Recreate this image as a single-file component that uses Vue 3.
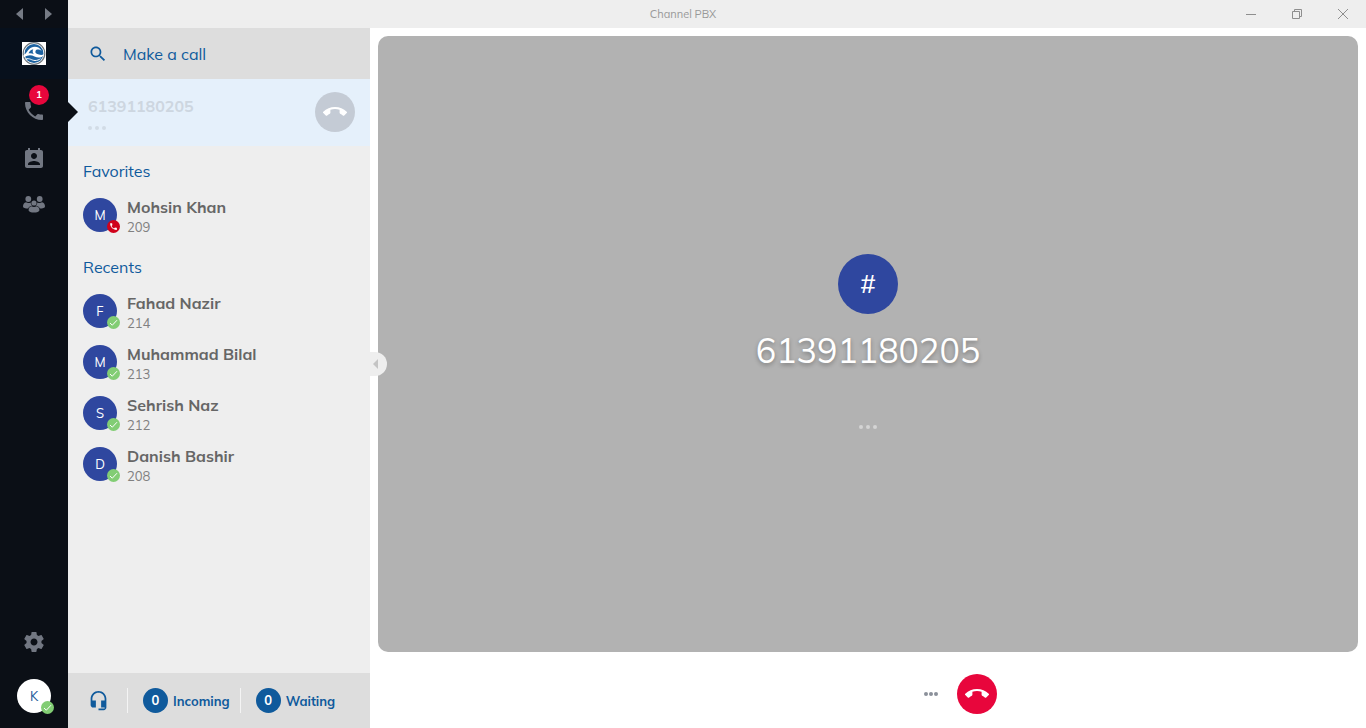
<script setup>
import { ref } from 'vue';

const query = ref('');
const activeNumber = ref('61391180205');

const groups = ref([
    {
        title: 'Favorites',
        contacts: [
            { name: 'Mohsin Khan', ext: '209', status: 'busy' }
        ]
    },
    {
        title: 'Recents',
        contacts: [
            { name: 'Fahad Nazir', ext: '214', status: 'online' },
            { name: 'Muhammad Bilal', ext: '213', status: 'online' },
            { name: 'Sehrish Naz', ext: '212', status: 'online' },
            { name: 'Danish Bashir', ext: '208', status: 'online' }
        ]
    }
]);

const queues = ref([
    { label: 'Incoming', count: 0 },
    { label: 'Waiting', count: 0 }
]);

// Material icon paths, 24x24
const icons = {
    search: 'M15.5 14h-.79l-.28-.27C15.41 12.59 16 11.11 16 9.5 16 5.91 13.09 3 9.5 3S3 5.91 3 9.5 5.91 16 9.5 16c1.61 0 3.09-.59 4.23-1.57l.27.28v.79l5 4.99L20.49 19l-4.99-5zm-6 0C7.01 14 5 11.99 5 9.5S7.01 5 9.5 5 14 7.01 14 9.5 11.99 14 9.5 14z',
    call: 'M6.62 10.79c1.44 2.83 3.76 5.14 6.59 6.59l2.2-2.2c.27-.27.67-.36 1.02-.24 1.12.37 2.33.57 3.57.57.55 0 1 .45 1 1V20c0 .55-.45 1-1 1-9.39 0-17-7.61-17-17 0-.55.45-1 1-1h3.5c.55 0 1 .45 1 1 0 1.25.2 2.45.57 3.57.11.35.03.74-.25 1.02l-2.2 2.2z',
    callEnd: 'M12 9c-1.6 0-3.15.25-4.6.72v3.1c0 .39-.23.74-.56.9-.98.49-1.87 1.12-2.66 1.85-.18.18-.43.28-.7.28-.28 0-.53-.11-.71-.29L.29 13.08c-.18-.17-.29-.42-.29-.7 0-.28.11-.53.29-.71C3.34 8.78 7.46 7 12 7s8.66 1.78 11.71 4.67c.18.18.29.43.29.71 0 .28-.11.53-.29.71l-2.48 2.48c-.18.18-.43.29-.71.29-.27 0-.52-.11-.7-.28-.79-.74-1.69-1.36-2.67-1.85-.33-.16-.56-.5-.56-.9v-3.1C15.15 9.25 13.6 9 12 9z',
    contacts: 'M19 3h-1V1h-2v2H8V1H6v2H5c-1.11 0-2 .9-2 2v14c0 1.1.89 2 2 2h14c1.1 0 2-.9 2-2V5c0-1.1-.9-2-2-2zm-7 3c1.66 0 3 1.34 3 3s-1.34 3-3 3-3-1.34-3-3 1.34-3 3-3zm6 12H6v-1c0-2 4-3.1 6-3.1s6 1.1 6 3.1v1z',
    settings: 'M19.43 12.98c.04-.32.07-.64.07-.98s-.03-.66-.07-.98l2.11-1.65c.19-.15.24-.42.12-.64l-2-3.46c-.12-.22-.39-.3-.61-.22l-2.49 1c-.52-.4-1.08-.73-1.69-.98l-.38-2.65C14.46 2.18 14.25 2 14 2h-4c-.25 0-.46.18-.49.42l-.38 2.65c-.61.25-1.17.59-1.69.98l-2.49-1c-.23-.09-.49 0-.61.22l-2 3.46c-.13.22-.07.49.12.64l2.11 1.65c-.04.32-.07.65-.07.98s.03.66.07.98l-2.11 1.65c-.19.15-.24.42-.12.64l2 3.46c.12.22.39.3.61.22l2.49-1c.52.4 1.08.73 1.69.98l.38 2.65c.03.24.24.42.49.42h4c.25 0 .46-.18.49-.42l.38-2.65c.61-.25 1.17-.59 1.69-.98l2.49 1c.23.09.49 0 .61-.22l2-3.46c.12-.22.07-.49-.12-.64l-2.11-1.65zM12 15.500c-1.930 0-3.500-1.570-3.500-3.500s1.570-3.500 3.500-3.500 3.500 1.570 3.500 3.500-1.570 3.500-3.500 3.500z',
    headset: 'M12 1c-4.970 0-9 4.030-9 9v7c0 1.660 1.340 3 3 3h3v-8H5v-2c0-3.870 3.130-7 7-7s7 3.130 7 7v2h-4v8h4v1h-7v2h6c1.660 0 3-1.340 3-3V10c0-4.970-4.030-9-9-9z'
};
</script>

<template>
    <div class="app">
        <header class="titlebar">
            <div class="titlebar-left">
                <div class="history">
                    <button class="history-btn" aria-label="Back">
                        <svg width="7" height="12" viewBox="0 0 7 12"><path d="M7 0v12L0 6z" /></svg>
                    </button>
                    <button class="history-btn" aria-label="Forward">
                        <svg width="7" height="12" viewBox="0 0 7 12"><path d="M0 0v12l7-6z" /></svg>
                    </button>
                </div>
            </div>
            <div class="title">Channel PBX</div>
            <div class="window-controls">
                <button class="window-btn" aria-label="Minimize">
                    <svg width="10" height="10" viewBox="0 0 10 10"><path d="M0 5.5h10" /></svg>
                </button>
                <button class="window-btn" aria-label="Restore">
                    <svg width="10" height="10" viewBox="0 0 10 10"><path d="M.5 2.5h7v7h-7zM2.5 2.5v-2h7v7h-2" /></svg>
                </button>
                <button class="window-btn" aria-label="Close">
                    <svg width="10" height="10" viewBox="0 0 10 10"><path d="M0 0l10 10M10 0L0 10" /></svg>
                </button>
            </div>
        </header>

        <div class="body">
            <nav class="rail">
                <div class="logo">
                    <svg width="24" height="23" viewBox="0 0 24 23">
                        <rect width="24" height="23" fill="#fff" />
                        <circle cx="12" cy="11.5" r="10.8" fill="#fff" stroke="#6c757c" stroke-width="1.2" />
                        <circle cx="12" cy="11.5" r="9.4" fill="#1c62a0" />
                        <path d="M1.500 13C4.500 12 5.500 7.500 9 5.700c4-2 8.800-.7 10.700 3.300-2.700-2-5.400-1.700-6.200-.1-.8 1.800 1 3.100 3.400 3.700 1.800.5 3.700.3 5-.2-1.500 3.500-5.700 4-9.400 2.100-3.500-1.800-6-2-11 1z" fill="#fff" />
                        <path d="M6.500 11.300C7.600 9 9 7.700 11.300 7.300c-1 1.700-.7 3.700.7 5-1.900-1-3.400-1.400-5.500-1z" fill="#1c62a0" />
                        <path d="M3.500 17.200c4-1.700 6 1.300 9.500 1.300 2.200 0 4-.7 5.500-1.800" fill="none" stroke="#fff" stroke-width="1" />
                    </svg>
                </div>
                <div class="rail-items">
                    <button class="rail-btn active" aria-label="Calls">
                        <svg width="24" height="24" viewBox="0 0 24 24"><path :d="icons.call" /></svg>
                        <span class="badge">1</span>
                    </button>
                    <button class="rail-btn" aria-label="Contacts">
                        <svg width="24" height="24" viewBox="0 -1 24 24"><path :d="icons.contacts" /></svg>
                    </button>
                    <button class="rail-btn" aria-label="Groups">
                        <svg width="24" height="24" viewBox="0 0 24 24">
                            <circle cx="6.300" cy="6" r="2.900" />
                            <circle cx="17.700" cy="6" r="2.900" />
                            <path d="M4 9.300c1.500 1 3.200 1 4.600.1.200 1.500.8 2.500 1.600 3.200-2.200.7-3.600 1.700-4 2.800-3 0-5.200-.5-5.200-2 0-2 1-3.600 3-4.100z" />
                            <path d="M20 9.300c-1.500 1-3.200 1-4.600.1-.2 1.500-.8 2.500-1.600 3.200 2.200.7 3.600 1.700 4 2.800 3 0 5.200-.5 5.200-2 0-2-1-3.600-3-4.100z" />
                            <circle cx="12" cy="10" r="2.600" />
                            <path d="M9.500 13.200c1.600 1 3.400 1 5 0 1.800.4 2.900 1.900 2.900 3.800 0 1.800-2.600 2.600-5.400 2.600s-5.400-.8-5.400-2.600c0-1.900 1.100-3.400 2.900-3.800z" />
                        </svg>
                    </button>
                </div>
                <div class="rail-bottom">
                    <button class="rail-btn" aria-label="Settings">
                        <svg width="24" height="24" viewBox="0 0 24 24"><path :d="icons.settings" /></svg>
                    </button>
                    <button class="avatar me" aria-label="My profile">
                        K
                        <span class="status online">
                            <svg width="9" height="9" viewBox="0 0 9 9"><path d="M1 5l2.300 2.200L8 2.200" /></svg>
                        </span>
                    </button>
                </div>
            </nav>

            <aside class="sidebar">
                <label class="search">
                    <svg width="20" height="20" viewBox="0 0 24 24"><path :d="icons.search" /></svg>
                    <input v-model="query" type="text" placeholder="Make a call" aria-label="Make a call">
                </label>

                <div class="current-call">
                    <div>
                        <div class="current-number">{{ activeNumber }}</div>
                        <div class="dots"><i></i><i></i><i></i></div>
                    </div>
                    <button class="hangup muted" aria-label="Hang up">
                        <svg width="24" height="24" viewBox="0 0 24 24"><path :d="icons.callEnd" /></svg>
                    </button>
                </div>

                <div class="contacts">
                    <section v-for="group in groups" :key="group.title">
                        <h2 class="group-title">{{ group.title }}</h2>
                        <ul class="contact-list">
                            <li v-for="contact in group.contacts" :key="contact.ext" class="contact">
                                <div class="avatar">
                                    {{ contact.name[0] }}
                                    <span class="status" :class="contact.status">
                                        <svg v-if="contact.status === 'online'" width="9" height="9" viewBox="0 0 9 9"><path d="M1 5l2.300 2.200L8 2.200" /></svg>
                                        <svg v-else width="9" height="9" viewBox="0 0 24 24"><path :d="icons.call" /></svg>
                                    </span>
                                </div>
                                <div class="contact-info">
                                    <div class="contact-name">{{ contact.name }}</div>
                                    <div class="contact-ext">{{ contact.ext }}</div>
                                </div>
                            </li>
                        </ul>
                    </section>
                </div>

                <footer class="queues">
                    <button class="headset" aria-label="Queues">
                        <svg width="21" height="21" viewBox="0 0 24 24"><path :d="icons.headset" /></svg>
                    </button>
                    <div v-for="queue in queues" :key="queue.label" class="queue">
                        <span class="queue-count">{{ queue.count }}</span>
                        <span>{{ queue.label }}</span>
                    </div>
                </footer>
            </aside>

            <main class="main">
                <button class="collapse" aria-label="Collapse sidebar">
                    <svg width="5" height="10" viewBox="0 0 5 10"><path d="M5 0v10L0 5z" /></svg>
                </button>
                <div class="stage">
                    <div class="stage-avatar">#</div>
                    <h1 class="stage-number">{{ activeNumber }}</h1>
                    <div class="dots stage-dots"><i></i><i></i><i></i></div>
                </div>
                <div class="controls">
                    <button class="more" aria-label="More options">
                        <svg width="14" height="4" viewBox="0 0 14 4">
                            <circle cx="2" cy="2" r="2" /><circle cx="7" cy="2" r="2" /><circle cx="12" cy="2" r="2" />
                        </svg>
                    </button>
                    <button class="hangup" aria-label="Hang up">
                        <svg width="24" height="24" viewBox="0 0 24 24"><path :d="icons.callEnd" /></svg>
                    </button>
                </div>
            </main>
        </div>
    </div>
</template>

<style>
body {
    margin: 0;
    background-color: #fff;
}
</style>

<style scoped>
* {
    box-sizing: border-box;
}

.app {
    display: flex;
    flex-direction: column;
    height: 100vh;
    font-family: "Mulish", "Muli", Lato, sans-serif;
    font-size: 13px;
    overflow: hidden;
}

button {
    padding: 0;
    border: none;
    background: none;
    font-family: inherit;
    cursor: pointer;
}

svg {
    display: block;
}

/* title bar */
.titlebar {
    display: grid;
    grid-template-columns: 1fr auto 1fr;
    align-items: center;
    flex-shrink: 0;
    height: 28px;
    background-color: #eee;
}

.history {
    display: flex;
    width: 68px;
    height: 28px;
    padding: 0 5px;
    background-color: #0b0f16;
    fill: #767b85;
}

.history-btn {
    display: flex;
    align-items: center;
    justify-content: center;
    flex: 1;
}

.title {
    color: #999;
    font-size: 11px;
}

.window-controls {
    display: flex;
    justify-content: flex-end;
    height: 28px;
}

.window-btn {
    display: flex;
    align-items: center;
    justify-content: center;
    width: 46px;
    fill: none;
    stroke: #8e8e8e;
}

.body {
    display: flex;
    flex: 1;
    min-height: 0;
}

/* left rail */
.rail {
    display: flex;
    flex-direction: column;
    align-items: center;
    flex-shrink: 0;
    width: 68px;
    background-color: #0b0f16;
    fill: #727782;
}

.logo {
    display: flex;
    align-items: center;
    justify-content: center;
    width: 100%;
    height: 51px;
    background-color: #07101c;
}

.rail-items {
    display: flex;
    flex-direction: column;
    gap: 1px;
    width: 100%;
    padding-top: 9px;
}

.rail-btn {
    position: relative;
    display: flex;
    align-items: center;
    justify-content: center;
    width: 100%;
    height: 46px;
}

.rail-btn.active::after {
    content: "";
    position: absolute;
    top: 14px;
    left: 100%;
    z-index: 2;
    border: 10px solid transparent;
    border-left-color: #0b0f16;
    border-right-width: 0;
}

.badge {
    position: absolute;
    top: -3px;
    left: 29px;
    width: 20px;
    border-radius: 50%;
    background-color: #e8063c;
    color: #fff;
    font-size: 10px;
    font-weight: 700;
    line-height: 20px;
    text-align: center;
}

.rail-bottom {
    display: flex;
    flex-direction: column;
    align-items: center;
    gap: 14px;
    width: 100%;
    margin-top: auto;
    padding-bottom: 15px;
}

.avatar {
    position: relative;
    flex-shrink: 0;
    width: 34px;
    height: 34px;
    border-radius: 50%;
    background-color: #2f479f;
    color: #fff;
    font-size: 13px;
    line-height: 34px;
    text-align: center;
}

.avatar.me {
    background-color: #fff;
    color: #1c5a9a;
}

.status {
    position: absolute;
    right: -3px;
    bottom: -1px;
    display: flex;
    align-items: center;
    justify-content: center;
    width: 13px;
    height: 13px;
    border-radius: 50%;
}

.status.online {
    background-color: #82cd74;
    fill: none;
    stroke: #fff;
}

.status.busy {
    background-color: #d0021b;
    fill: #fff;
}

/* sidebar */
.sidebar {
    display: flex;
    flex-direction: column;
    flex-shrink: 0;
    width: 302px;
    background-color: #eee;
}

.search {
    display: flex;
    align-items: center;
    gap: 15px;
    height: 51px;
    padding: 0 20px;
    background-color: #ddd;
    fill: #0f5a9c;
}

.search input {
    flex: 1;
    min-width: 0;
    padding: 0;
    border: none;
    outline: none;
    background: none;
    color: #0f5a9c;
    font-family: inherit;
    font-size: 16px;
}

.search input::placeholder {
    color: #0f5a9c;
    opacity: 1;
}

.current-call {
    display: flex;
    align-items: center;
    justify-content: space-between;
    height: 67px;
    padding: 0 15px 1px 20px;
    background-color: #e5f0fb;
}

.current-number {
    color: #cdd6e0;
    font-size: 16px;
    font-weight: 700;
    line-height: 22px;
}

.dots {
    display: flex;
    gap: 3px;
    padding-top: 9px;
}

.dots i {
    width: 4px;
    height: 4px;
    border-radius: 50%;
    background-color: #d2dce6;
}

.hangup {
    display: flex;
    align-items: center;
    justify-content: center;
    width: 40px;
    height: 40px;
    border-radius: 50%;
    background-color: #e8063c;
    fill: #fff;
}

.hangup.muted {
    background-color: #c4cbd5;
}

.contacts {
    flex: 1;
    min-height: 0;
    overflow: hidden;
}

.group-title {
    margin: 0;
    padding: 14px 15px 8px;
    color: #0f5a9c;
    font-size: 16px;
    font-weight: 400;
    line-height: 22px;
}

.contact-list {
    margin: 0;
    padding: 0 0 1px;
    list-style: none;
}

.contact {
    display: flex;
    align-items: center;
    gap: 10px;
    height: 51px;
    padding: 0 15px 1px;
}

.contact-info {
    padding-top: 4px;
}

.contact-name {
    color: #666;
    font-size: 16px;
    font-weight: 700;
    line-height: 20px;
}

.contact-ext {
    color: #808080;
    font-size: 13px;
    line-height: 20px;
}

.queues {
    display: flex;
    align-items: center;
    height: 55px;
    padding-left: 20px;
    background-color: #ddd;
    color: #0f5a9c;
    font-weight: 700;
}

.headset {
    margin-right: 18px;
    fill: #0f5a9c;
}

.queue {
    display: flex;
    align-items: center;
    gap: 5px;
    height: 25px;
    margin-right: 10px;
    padding-left: 15px;
    border-left: 1px solid #f4f4f4;
}

.queue-count {
    width: 25px;
    border-radius: 50%;
    background-color: #0f5a9c;
    color: #fff;
    line-height: 25px;
    text-align: center;
}

/* call stage */
.main {
    position: relative;
    display: flex;
    flex-direction: column;
    flex: 1;
    min-width: 0;
    padding: 8px 8px 0;
}

.collapse {
    position: absolute;
    top: 324px;
    left: 0;
    width: 17px;
    height: 24px;
    padding-left: 3px;
    border-radius: 0 12px 12px 0;
    background-color: #eee;
    fill: #c4c4c4;
}

.stage {
    display: flex;
    flex-direction: column;
    align-items: center;
    justify-content: center;
    flex: 1;
    border-radius: 10px;
    background-color: #b2b2b2;
}

.stage-avatar {
    width: 60px;
    border-radius: 50%;
    background-color: #2f479f;
    color: #fff;
    font-size: 26px;
    line-height: 60px;
    text-align: center;
}

.stage-number {
    margin: 14px 0 46px;
    color: #fff;
    font-size: 34px;
    font-weight: 400;
    line-height: 46px;
    text-shadow: 0 2px 4px rgba(0, 0, 0, 0.3);
}

.stage-dots {
    padding: 5px 0;
}

.stage-dots i {
    background-color: #d4d4d4;
}

.controls {
    display: flex;
    align-items: center;
    justify-content: center;
    gap: 19px;
    padding: 22px 0 14px 185px;
}

.more {
    fill: #8b909a;
}
</style>
